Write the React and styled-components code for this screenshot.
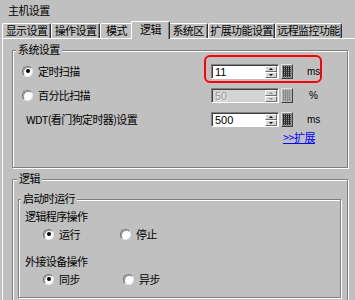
import React from 'react';
import styled, { createGlobalStyle, css } from 'styled-components';

const Global = createGlobalStyle`
  html, body { margin: 0; padding: 0; background: #c0c0c0; }
  body { font-family: "Noto Sans CJK SC", "Noto Sans", sans-serif; }
`;

const Window = styled.div`
  width: 355px;
  height: 300px;
  overflow: hidden;
  background: #c0c0c0;
  color: #000;
  font-family: "Noto Sans CJK SC", "Noto Sans", sans-serif;
  font-size: 11px;
  letter-spacing: -0.6px;
  display: flex;
  flex-direction: column;
`;

const Title = styled.div`
  flex-shrink: 0;
  height: 21px;
  box-sizing: border-box;
  padding: 4px 0 0 8px;
  line-height: 13px;
`;

const TabStrip = styled.div`
  flex-shrink: 0;
  display: flex;
  align-items: flex-end;
  height: 17px;
  padding-left: 2px;
  position: relative;
  z-index: 1;
`;

const Tab = styled.div`
  box-sizing: border-box;
  width: ${(p) => p.$w}px;
  height: 15px;
  line-height: 13px;
  text-align: center;
  white-space: nowrap;
  background: #c0c0c0;
  border-top: 1px solid #fff;
  border-left: 1px solid #fff;
  border-right: 1px solid #303030;
  box-shadow: inset -1px 0 0 #808080;
  border-radius: 2px 2px 0 0;
  ${(p) =>
    p.$active &&
    css`
      height: 18px;
      margin: 0 -2px -1px -2px;
      padding-top: 1px;
      position: relative;
      z-index: 2;
    `}
`;

const Panel = styled.div`
  flex: 1;
  min-height: 0;
  overflow: hidden;
  margin-left: 2px;
  border-top: 1px solid #fff;
  border-left: 1px solid #fff;
  padding: 11px 0 0 9px;
  display: flex;
  flex-direction: column;
`;

const GroupBox = styled.div`
  position: relative;
  box-sizing: border-box;
  width: ${(p) => p.$w}px;
  height: ${(p) => p.$h}px;
  margin-top: ${(p) => p.$mt || 0}px;
  border: 1px solid #808080;
  box-shadow: inset 1px 1px 0 #fff, 1px 1px 0 #fff;
  flex-shrink: 0;
`;

const Legend = styled.span`
  position: absolute;
  top: -8px;
  left: ${(p) => p.$left}px;
  padding: 0 2px;
  line-height: 13px;
  background: #c0c0c0;
  white-space: nowrap;
`;

const SystemBody = styled.div`
  padding: 8px 0 0 9px;
`;

const Row = styled.div`
  position: relative;
  display: flex;
  align-items: center;
  height: 24px;
`;

const LabelCell = styled.div`
  width: 189px;
  display: flex;
  align-items: center;
  gap: 5px;
  padding-left: ${(p) => p.$indent || 0}px;
  box-sizing: border-box;
  white-space: nowrap;
  line-height: 13px;
`;

const RadioDot = styled.span`
  box-sizing: border-box;
  width: 11px;
  height: 11px;
  border-radius: 50%;
  background: #fff;
  border: 1px solid;
  border-color: #707070 #e8e8e8 #e8e8e8 #707070;
  box-shadow: inset 1px 1px 0 #a0a0a0;
  display: flex;
  align-items: center;
  justify-content: center;
  flex-shrink: 0;
  &::after {
    content: '';
    width: 4px;
    height: 4px;
    border-radius: 50%;
    background: ${(p) => (p.$checked ? '#000' : 'transparent')};
  }
`;

const NumberField = styled.div`
  box-sizing: border-box;
  width: 68px;
  height: 15px;
  display: flex;
  border: 1px solid;
  border-color: #808080 #fff #fff #808080;
  box-shadow: inset 1px 1px 0 #404040;
  background: ${(p) => (p.$disabled ? '#d4d4d4' : '#fff')};
`;

const FieldValue = styled.span`
  flex: 1;
  padding: 1px 0 0 3px;
  font-family: "Liberation Sans", Arial, sans-serif;
  font-size: 11px;
  letter-spacing: 0;
  line-height: 12px;
  color: ${(p) => (p.$disabled ? '#9a9a9a' : '#000')};
  text-shadow: ${(p) => (p.$disabled ? '1px 1px 0 #f0f0f0' : 'none')};
`;

const Spinner = styled.div`
  width: 12px;
  display: flex;
  flex-direction: column;
  padding: 1px 1px 0 0;
`;

const SpinBtn = styled.div`
  flex: 1;
  box-sizing: border-box;
  background: #d6d6d6;
  border: 1px solid;
  border-color: #fff #707070 #707070 #fff;
  display: flex;
  align-items: center;
  justify-content: center;
  &::after {
    content: '';
    width: 0;
    height: 0;
    border-left: 2px solid transparent;
    border-right: 2px solid transparent;
    ${(p) =>
      p.$up
        ? css`border-bottom: 2px solid ${p.$disabled ? '#909090' : '#000'};`
        : css`border-top: 2px solid ${p.$disabled ? '#909090' : '#000'};`}
  }
`;

const KeyButton = styled.div`
  box-sizing: border-box;
  width: 12px;
  height: 15px;
  margin-left: 2px;
  background: ${(p) => (p.$disabled ? '#b4b4b4' : '#8e8e8e')};
  border: 1px solid;
  border-color: #e0e0e0 #404040 #404040 #e0e0e0;
  display: flex;
  align-items: center;
  justify-content: center;
`;

const Unit = styled.span`
  margin-left: 14px;
  font-family: "Liberation Sans", Arial, sans-serif;
  font-size: 10px;
  letter-spacing: 0;
  padding-left: ${(p) => p.$pad || 0}px;
`;

const Highlight = styled.div`
  position: absolute;
  left: 182px;
  top: -4px;
  width: 118px;
  height: 28px;
  box-sizing: border-box;
  border: 2px solid #ff0000;
  border-radius: 6px;
  pointer-events: none;
`;

const LinkRow = styled.div`
  height: 12px;
  line-height: 12px;
  padding-left: 261px;
`;

const Link = styled.a`
  color: #0000ff;
  text-decoration: underline;
  font-size: 11px;
  cursor: pointer;
`;

const LogicBody = styled.div`
  padding: 19px 0 0 5px;
`;

const InnerBody = styled.div`
  padding: 8px 0 0 6px;
`;

const SubLabel = styled.div`
  height: 16px;
  line-height: 16px;
  margin-top: ${(p) => p.$mt || 0}px;
  white-space: nowrap;
`;

const RadioRow = styled.div`
  display: flex;
  align-items: center;
  height: 20px;
  padding-left: 18px;
`;

const Option = styled.label`
  display: flex;
  align-items: center;
  gap: 5px;
  width: ${(p) => p.$w || 'auto'};
  white-space: nowrap;
  line-height: 13px;
`;

const KeypadIcon = ({ disabled }) => {
  const c = disabled ? '#8c8c8c' : '#2a2a2a';
  return (
    <svg width="8" height="11" viewBox="0 0 8 11">
      {[0, 2, 4, 6].map((x) => (
        <rect key={'v' + x} x={x} y="0" width="1" height="11" fill={c} />
      ))}
      {[1, 3, 5, 7, 9].map((y) => (
        <rect key={'h' + y} x="0" y={y} width="8" height="1" fill={c} opacity="0.7" />
      ))}
    </svg>
  );
};

const NumberInput = ({ value, disabled }) => (
  <>
    <NumberField $disabled={disabled}>
      <FieldValue $disabled={disabled}>{value}</FieldValue>
      <Spinner>
        <SpinBtn $up $disabled={disabled} />
        <SpinBtn $disabled={disabled} />
      </Spinner>
    </NumberField>
    <KeyButton $disabled={disabled}>
      <KeypadIcon disabled={disabled} />
    </KeyButton>
  </>
);

const tabs = [
  { label: '显示设置', w: 49 },
  { label: '操作设置', w: 49 },
  { label: '模式', w: 33 },
  { label: '逻辑', w: 39, active: true },
  { label: '系统区', w: 40 },
  { label: '扩展功能设置', w: 67 },
  { label: '远程监控功能', w: 67 },
];

export default function App() {
  return (
    <>
      <Global />
      <Window>
        <Title>主机设置</Title>
        <TabStrip>
          {tabs.map((t) => (
            <Tab key={t.label} $w={t.w} $active={t.active}>
              {t.label}
            </Tab>
          ))}
        </TabStrip>
        <Panel>
          <GroupBox $w={336} $h={118}>
            <Legend $left={3}>系统设置</Legend>
            <SystemBody>
              <Row>
                <LabelCell>
                  <RadioDot $checked />
                  定时扫描
                </LabelCell>
                <NumberInput value="11" />
                <Unit>ms</Unit>
                <Highlight />
              </Row>
              <Row>
                <LabelCell>
                  <RadioDot />
                  百分比扫描
                </LabelCell>
                <NumberInput value="50" disabled />
                <Unit $pad={2}>%</Unit>
              </Row>
              <Row>
                <LabelCell $indent={4}>WDT(看门狗定时器)设置</LabelCell>
                <NumberInput value="500" />
                <Unit>ms</Unit>
              </Row>
              <LinkRow>
                <Link>&gt;&gt;扩展</Link>
              </LinkRow>
            </SystemBody>
          </GroupBox>
          <GroupBox $w={336} $h={140} $mt={11}>
            <Legend $left={4}>逻辑</Legend>
            <LogicBody>
              <GroupBox $w={323} $h={99}>
                <Legend $left={2}>启动时运行</Legend>
                <InnerBody>
                  <SubLabel>逻辑程序操作</SubLabel>
                  <RadioRow>
                    <Option $w="77px">
                      <RadioDot $checked />
                      运行
                    </Option>
                    <Option>
                      <RadioDot />
                      停止
                    </Option>
                  </RadioRow>
                  <SubLabel $mt={9}>外接设备操作</SubLabel>
                  <RadioRow>
                    <Option $w="80px">
                      <RadioDot $checked />
                      同步
                    </Option>
                    <Option>
                      <RadioDot />
                      异步
                    </Option>
                  </RadioRow>
                </InnerBody>
              </GroupBox>
            </LogicBody>
          </GroupBox>
        </Panel>
      </Window>
    </>
  );
}
